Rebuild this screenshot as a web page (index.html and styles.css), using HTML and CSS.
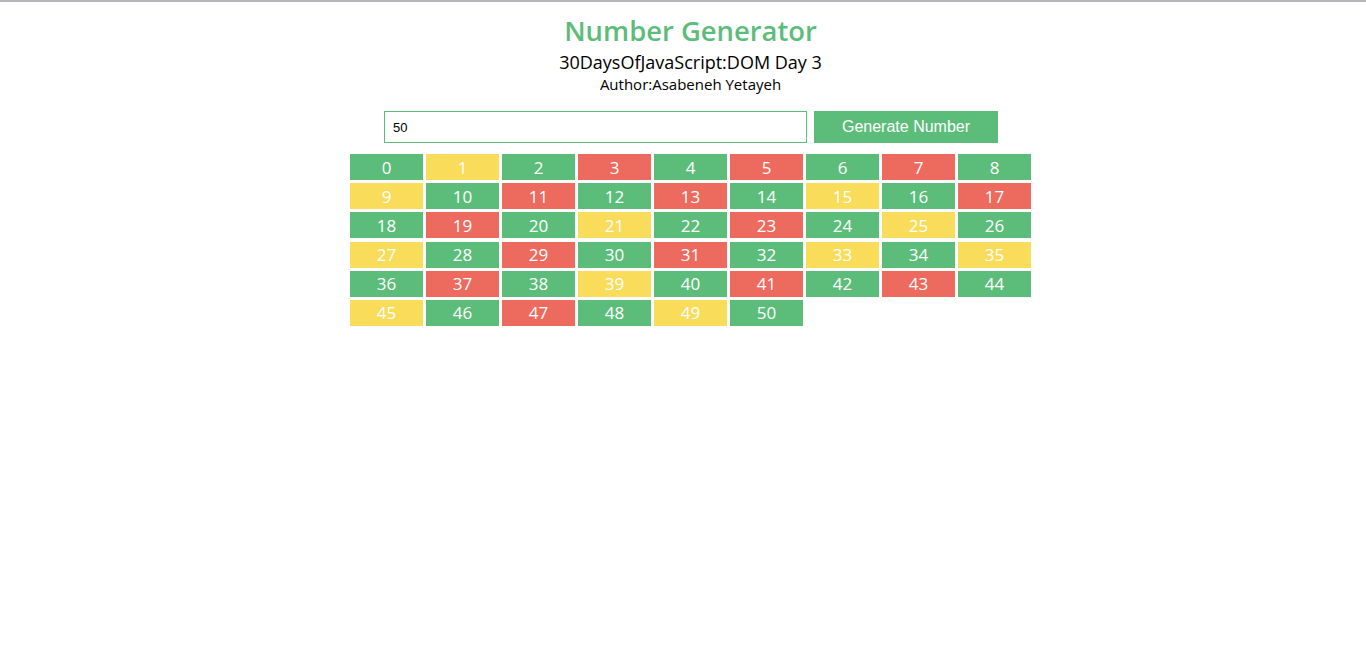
FILE: index.html
```html
<!DOCTYPE html>
<html>
<head>
<meta charset="utf-8">
<link rel="stylesheet" href="styles.css">
</head>
<body>
<div class="page">
  <header class="header">
    <h1 class="title">Number Generator</h1>
    <h2 class="subtitle">30DaysOfJavaScript:DOM Day 3</h2>
    <h3 class="author">Author:Asabeneh Yetayeh</h3>
  </header>
  <div class="controls">
    <input class="num-input" type="text" value="50">
    <button class="gen-btn">Generate Number</button>
  </div>
  <div class="grid" id="grid"></div>
</div>
<script src="script.js"></script>
</body>
</html>
```
FILE: styles.css
```css
html, body {
  margin: 0;
  padding: 0;
  background: #fff;
}
body {
  border-top: 2px solid #b4b4bb;
  font-family: "Open Sans", "Noto Sans", sans-serif;
}
.page {
  padding-left: 15px;
  display: flex;
  flex-direction: column;
  align-items: center;
}
.header {
  text-align: center;
}
.title {
  margin: 12px 0 0;
  font-size: 27.4px;
  line-height: 34px;
  font-weight: 600;
  color: #5cbd7a;
}
.subtitle {
  margin: 2px 0 0;
  font-size: 18px;
  line-height: 24px;
  font-weight: 400;
  color: #000;
}
.author {
  margin: 0;
  font-size: 15px;
  line-height: 20px;
  font-weight: 400;
  color: #000;
}
.controls {
  display: flex;
  gap: 7px;
  margin-top: 17px;
  padding-left: 1px;
}
.num-input {
  box-sizing: border-box;
  width: 423px;
  height: 32px;
  border: 1px solid #5cbd7a;
  padding: 0 8px;
  font-family: "Liberation Sans", Arial, sans-serif;
  font-size: 13px;
  color: #000;
  outline: none;
}
.gen-btn {
  box-sizing: border-box;
  width: 184px;
  height: 32px;
  border: none;
  background: #5cbd7a;
  color: #fff;
  font-family: "Liberation Sans", Arial, sans-serif;
  font-size: 16px;
  padding: 0;
}
.grid {
  display: grid;
  grid-template-columns: repeat(9, 73px);
  column-gap: 3px;
  row-gap: 3.2px;
  margin-top: 11px;
}
.cell {
  height: 26px;
  display: flex;
  align-items: center;
  justify-content: center;
  color: #fff;
  font-size: 17px;
}
.even { background: #5cbd7a; }
.odd { background: #f8dc5a; }
.prime { background: #ec6b5e; }
```
FILE: script.js
```js
(function () {
  var grid = document.getElementById('grid');
  function isPrime(n) {
    if (n < 2) return false;
    for (var i = 2; i * i <= n; i++) if (n % i === 0) return false;
    return true;
  }
  for (var i = 0; i <= 50; i++) {
    var d = document.createElement('div');
    var cls = 'cell ';
    if (i % 2 === 0) cls += 'even';
    else if (isPrime(i)) cls += 'prime';
    else cls += 'odd';
    d.className = cls;
    d.textContent = i;
    grid.appendChild(d);
  }
})();
```
